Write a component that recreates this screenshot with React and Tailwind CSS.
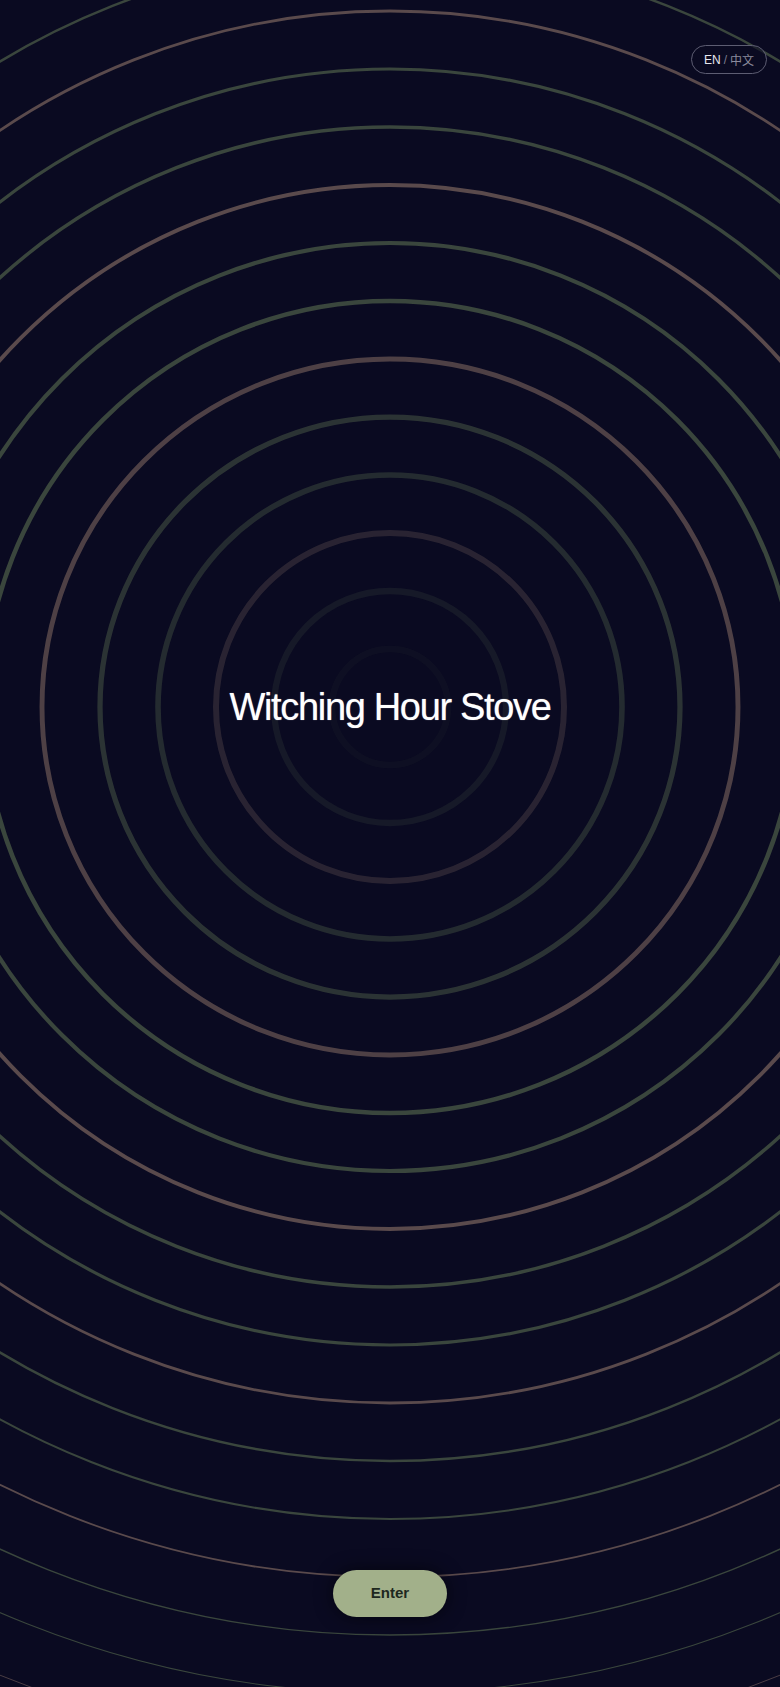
const GAP = 58

const rings = Array.from({ length: 20 }, (_, i) => {
  const k = i + 1
  const brown = k % 3 === 0
  return {
    k,
    r: k * GAP,
    color: brown ? '#5a4a4c' : '#3a463d',
    width: Math.max(0.8, 7 - 0.35 * k),
    opacity: Math.min(1, (k - 0.3) * 0.15),
  }
})

const Rings = () => (
  <svg
    className="absolute left-1/2 top-1/2 -translate-x-1/2 -translate-y-1/2 pointer-events-none"
    width="2400"
    height="2400"
    viewBox="-1200 -1200 2400 2400"
  >
    {rings.map(ring => (
      <circle
        key={ring.k}
        cx="0"
        cy="0"
        r={ring.r}
        fill="none"
        stroke={ring.color}
        strokeWidth={ring.width}
        strokeOpacity={ring.opacity}
      />
    ))}
  </svg>
)

export default function App() {
  return (
    <div
      className="relative flex flex-col h-[1687px] w-full overflow-hidden bg-[#0a0a21] text-white"
      style={{ fontFamily: '"Liberation Sans", Arial, "Noto Sans CJK SC", sans-serif' }}
    >
      <section className="relative flex flex-1 items-center justify-center">
        <Rings />
        <h1 className="relative text-[38px] font-normal tracking-[-0.035em] leading-none text-white [text-shadow:0_0_1px_rgba(255,255,255,0.6)]">
          Witching Hour Stove
        </h1>
      </section>

      <footer className="relative flex h-[273px] items-start justify-center pt-[156px]">
        <button className="h-[47px] w-[114px] rounded-full bg-[#a2b08a] text-[15px] font-bold text-[#1e281e] shadow-[0_0_18px_rgba(0,0,0,0.6)]">
          Enter
        </button>
      </footer>

      <button className="absolute top-[45px] right-[13px] flex h-[29px] items-center gap-[3px] rounded-full border border-[#5d5d72] bg-[#0a0a21]/60 px-3 text-[12px] leading-none">
        <span className="text-[#e6e6ee]">EN</span>
        <span className="text-[#7c7c8e]">/</span>
        <span className="text-[#8a8a9c]" style={{ fontFamily: '"Noto Sans CJK SC", sans-serif' }}>中文</span>
      </button>
    </div>
  )
}
